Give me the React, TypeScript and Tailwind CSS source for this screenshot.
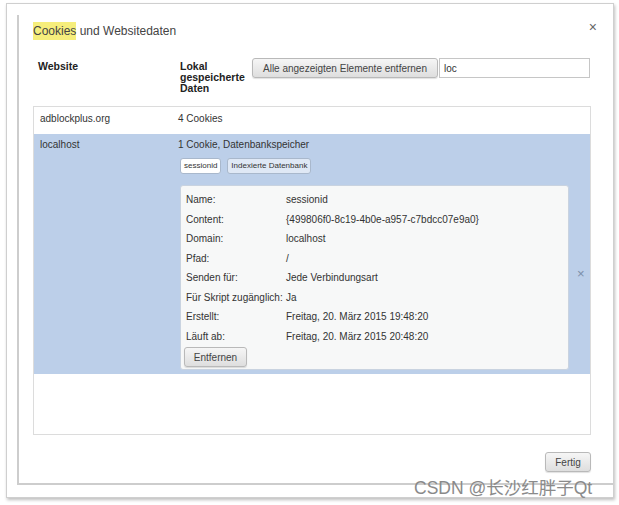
import React from "react";

const font = { fontFamily: '"Liberation Sans", "DejaVu Sans", sans-serif' };

function Btn({ children, className = "" }: { children: React.ReactNode; className?: string }) {
  return (
    <div
      className={
        "flex items-center justify-center rounded-[3px] border border-[#b9b9b9] bg-gradient-to-b from-[#f6f6f6] to-[#dedede] text-[10px] text-[#444] shadow-[0_1px_1px_rgba(0,0,0,0.12)] " +
        className
      }
    >
      {children}
    </div>
  );
}

const details: [string, string][] = [
  ["Name:", "sessionid"],
  ["Content:", "{499806f0-8c19-4b0e-a957-c7bdcc07e9a0}"],
  ["Domain:", "localhost"],
  ["Pfad:", "/"],
  ["Senden für:", "Jede Verbindungsart"],
  ["Für Skript zugänglich:", "Ja"],
  ["Erstellt:", "Freitag, 20. März 2015 19:48:20"],
  ["Läuft ab:", "Freitag, 20. März 2015 20:48:20"],
];

export default function App() {
  return (
    <div className="relative h-[505px] w-[619px] overflow-hidden bg-white" style={font}>
      {/* outer window */}
      <div className="ml-[6px] mt-[3px] h-[495px] w-[608px] border border-[#cfcfcf] pl-[10px] pt-[11px] shadow-[1px_2px_3px_rgba(0,0,0,0.25)]">
        {/* inner dialog */}
        <div className="relative flex h-[470px] flex-col border-b-2 border-l-2 border-[#cdcdcd] bg-white pl-[14px] pr-[22px] text-[10px] text-[#333]">
          {/* title */}
          <div className="mt-[8px] flex h-[16px] items-center text-[12px] text-[#444]">
            <span className="bg-[#f6ee7c]">Cookies</span>
            <span>&nbsp;und Websitedaten</span>
          </div>
          <div className="absolute right-[16px] top-[2px] text-[14px] text-[#666]">×</div>

          {/* header */}
          <div className="mt-[19px] flex h-[37px] items-start">
            <div className="w-[147px] pl-[5px] pt-[3px] text-[10.5px] font-bold leading-[11px] text-[#222]">Website</div>
            <div className="w-[72px] pt-[3px] text-[10.5px] font-bold leading-[11px] text-[#222]">
              Lokal
              <br />
              gespeicherte
              <br />
              Daten
            </div>
            <Btn className="h-[20px] w-[186px]">Alle angezeigten Elemente entfernen</Btn>
            <div className="ml-[1px] flex h-[20px] w-[151px] items-center border border-[#c6c6c6] bg-white pl-[4px] text-[10px] text-[#333]">
              loc
            </div>
          </div>

          {/* list */}
          <div className="mt-[11px] flex h-[329px] flex-col border border-[#dcdcdc]">
            <div className="flex h-[27px] items-start pt-[4px]">
              <div className="w-[144px] pl-[6px]">adblockplus.org</div>
              <div>4 Cookies</div>
            </div>
            <div className="flex h-[240px] bg-[#bccfe9]">
              <div className="w-[144px] pl-[6px] pt-[3px]">localhost</div>
              <div className="flex flex-1 flex-col">
                <div className="pt-[3px]">1 Cookie, Datenbankspeicher</div>
                <div className="ml-[2px] mt-[6px] flex gap-[6px]">
                  <div className="flex h-[16px] items-center rounded-[3px] border border-[#a9b8cc] bg-white px-[3px] text-[8px]">sessionid</div>
                  <div className="flex h-[16px] items-center rounded-[3px] border border-[#a9b8cc] bg-[#dfe8f5] px-[3px] text-[8px]">Indexierte Datenbank</div>
                </div>
                <div className="flex items-center">
                  <div className="ml-[2px] mt-[11px] flex h-[185px] w-[389px] flex-col rounded-[3px] border border-[#c9d3e0] bg-[#f7f8f8] px-[5px] pt-[4px]">
                    {details.map(([k, v]) => (
                      <div key={k} className="flex h-[19.5px] items-center">
                        <div className="w-[100px] whitespace-nowrap">{k}</div>
                        <div className="whitespace-nowrap">{v}</div>
                      </div>
                    ))}
                    <Btn className="-ml-[2px] mt-[1px] h-[20px] w-[63px]">Entfernen</Btn>
                  </div>
                  <div className="ml-[8px] mt-[4px] text-[13px] text-[#7b8ea8]">×</div>
                </div>
              </div>
            </div>
          </div>

          <div className="mt-[17px] flex justify-end">
            <Btn className="h-[20px] w-[46px]">Fertig</Btn>
          </div>
        </div>
      </div>

      {/* watermark */}
      <div
        className="absolute left-[414px] top-[475px] whitespace-nowrap text-[17.5px] text-[#8a8a8a]"
        style={{ fontFamily: '"Liberation Sans", "Noto Sans CJK SC", sans-serif' }}
      >
        CSDN @长沙红胖子Qt
      </div>
    </div>
  );
}
